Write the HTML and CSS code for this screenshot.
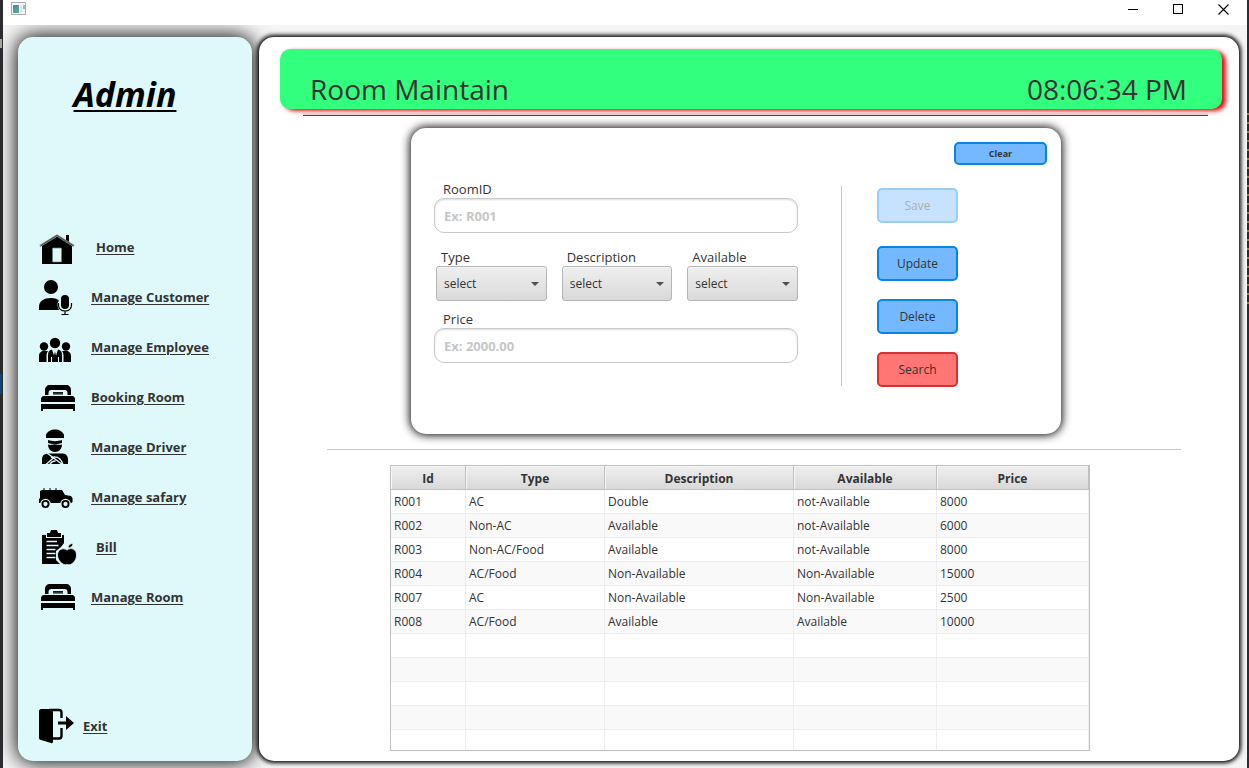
FILE: index.html
```html
<!DOCTYPE html>
<html lang="en">
<head>
<meta charset="utf-8">
<title>Room Maintain</title>
<link rel="stylesheet" href="styles.css">
</head>
<body>
<div class="window">
  <header class="titlebar">
    <svg class="titlebar__icon" width="16" height="14" viewBox="0 0 16 14" aria-hidden="true">
      <defs><linearGradient id="pane" x1="0" y1="0" x2="1" y2="1"><stop offset="0" stop-color="#4a83b5"/><stop offset="1" stop-color="#5fb287"/></linearGradient></defs>
      <rect x="0.5" y="0.5" width="14" height="12" fill="#fafafa" stroke="#a9adb3"/>
      <rect x="2" y="3" width="6" height="8" fill="url(#pane)"/>
      <rect x="9" y="3" width="2" height="8" fill="#dfe2e4"/>
      <rect x="12" y="3" width="2" height="4" fill="#8fbcc0"/>
    </svg>
    <div class="titlebar__controls">
      <button class="winbtn" aria-label="Minimize"><svg width="11" height="11" viewBox="0 0 11 11"><path d="M0 5.500h10" stroke="#000"/></svg></button>
      <button class="winbtn" aria-label="Maximize"><svg width="11" height="11" viewBox="0 0 11 11"><rect x="0.500" y="0.500" width="9" height="9" fill="none" stroke="#000"/></svg></button>
      <button class="winbtn" aria-label="Close"><svg width="11" height="11" viewBox="0 0 11 11"><path d="M0.500 0.500l10 10M10.500 0.500l-10 10" stroke="#000" stroke-width="1.100"/></svg></button>
    </div>
  </header>

  <div class="workspace">
    <aside class="sidebar">
      <h1 class="sidebar__title">Admin</h1>
      <nav class="nav">
        <a class="nav__link nav__link--inset" href="#home">
          <svg class="icon" viewBox="0 0 36 36"><path d="M3 16L18 7l15 9v19H3z"/><path d="M27 6h3v9l-3-2z"/><path d="M1 17L18 6.500 35 17" fill="none" stroke="#77898b" stroke-width="2.200"/><path d="M2 16.500L18 6.500 34 16.500" fill="none" stroke="#222" stroke-width=".6"/><path d="M13.500 19h9v14h-9z" fill="#dff8fa" stroke="#6f8082" stroke-width=".7"/></svg>
          <span>Home</span></a>
        <a class="nav__link" href="#customer">
          <svg class="icon" viewBox="0 0 36 36"><circle cx="12" cy="8" r="7"/><path d="M0 31v-3c0-6 5-9 12-9 4 0 7 1 8 3-2 1-2 5 0 9z"/><rect x="22" y="16" width="8" height="14" rx="4"/><path d="M19.500 24v2c0 4 3 6 6.500 6s6.500-2 6.500-6v-2M26 32v4M22.500 35.500h7" fill="none" stroke="#000" stroke-width="1.200"/></svg>
          <span>Manage Customer</span></a>
        <a class="nav__link" href="#employee">
          <svg class="icon" viewBox="0 0 36 36"><circle cx="16" cy="14" r="5.200"/><circle cx="5" cy="17.500" r="4.200"/><circle cx="27" cy="17.500" r="4.200"/><path d="M0 33v-6c0-3 2-5 5-5h4c-1 1-1.500 3-1.500 5v6zM32 33v-6c0-3-2-5-5-5h-4c1 1 1.500 3 1.500 5v6zM9 33v-7c0-3 1-4.500 4-5.500l2 6 1-4 1 4 2-6c3 1 4 2.500 4 5.500v7z"/><path d="M12.500 33v-5M19.500 33v-5" stroke="#dff8fa"/></svg>
          <span>Manage Employee</span></a>
        <a class="nav__link" href="#booking">
          <svg class="icon" viewBox="0 0 36 36"><path d="M6 16v-5c0-3 2-5 5-5h16c3 0 5 2 5 5v5h-3.500v-2c0-2-1-3-3-3H12.500c-2 0-3 1-3 3v2zM14 13h10v2.500H14zM5 17h28c2 0 3 1.500 3 3v3H2v-3c0-1.500 1-3 3-3zM2 25h34v7h-2v-2H4v2H2z"/><path d="M14 14.200h10" stroke="#67797b" stroke-width=".7"/></svg>
          <span>Booking Room</span></a>
        <a class="nav__link" href="#driver">
          <svg class="icon" viewBox="0 0 36 36"><path d="M7 6c1-3.500 5-5.500 9-5.500S24 2.500 25 6v3H7zM9 11c4 1.500 10 1.500 14 0v3c-4 1.500-10 1.500-14 0zM9 15.500c2 1 4 0 7 0s5 1 7 0c0 4.500-3 7.500-7 7.500s-7-3-7-7.500zM3 35v-5c0-3 2-5 5-5.500h16c3 0 5 3 5 5.500v5z"/><path d="M8 24L24 36M7 35.500l9-8M12 28.500c6-2 10 1 12 7M10.500 36c1-2 3-4 6-4" fill="none" stroke="#dff8fa" stroke-width="1.300"/></svg>
          <span>Manage Driver</span></a>
        <a class="nav__link" href="#safary">
          <svg class="icon" viewBox="0 0 36 36"><path d="M1 12l2-1h20l3 5 6 1 1.500 2v4l-1 1H0v-4l1-1z"/><path d="M5 10.500v-1M11 10.500v-1M17 10.500v-1" stroke="#000" stroke-width="2"/><circle cx="6.500" cy="25" r="5.300" fill="#dff8fa"/><circle cx="26.500" cy="25" r="5.300" fill="#dff8fa"/><circle cx="6.500" cy="25" r="3.100" fill="none" stroke="#000" stroke-width="1.900"/><circle cx="26.500" cy="25" r="3.100" fill="none" stroke="#000" stroke-width="1.900"/></svg>
          <span>Manage safary</span></a>
        <a class="nav__link nav__link--inset" href="#bill">
          <svg class="icon" viewBox="0 0 36 36" overflow="visible"><path d="M3 6h4v3h16V6h2v8l-3 4-5 4v9l4 4H3z"/><path d="M8 4h3l1-3h6l1 3h3v4H8z"/><path d="M7.500 12.500H18M7.500 16.500h12M7.500 20.500h9M7.500 24.500h9M7.500 28.500h9" stroke="#dff8fa" stroke-width="1.600"/><path d="M28 21c4-3 9.500-1 9.500 5s-5 11-9.500 9.500C23.500 37 18.500 31 18.500 26s5-8 9.500-5zM29 19c0-3 2-4.500 5-4.500 0 2.500-2 4.500-5 4.500zM25.500 15l2 4" stroke="#dff8fa" stroke-width=".8"/></svg>
          <span>Bill</span></a>
        <a class="nav__link" href="#room">
          <svg class="icon" viewBox="0 0 36 36"><path d="M6 15v-5c0-3 2-5 5-5h16c3 0 5 2 5 5v5h-3.500v-2c0-2-1-3-3-3H12.500c-2 0-3 1-3 3v2zM14 12h10v2.500H14zM5 16h28c2 0 3 1.500 3 3v3H2v-3c0-1.500 1-3 3-3zM2 24h34v7h-2v-2H4v2H2z"/><path d="M14 13.200h10" stroke="#67797b" stroke-width=".7"/></svg>
          <span>Manage Room</span></a>
      </nav>
      <a class="nav__link nav__link--exit" href="#exit">
        <svg class="icon" viewBox="0 0 36 36"><path d="M2 1h9c2 0 3 1 3 3v30c0 1-1 1.500-2 1L2 32c-1 0-2-1-2-2V3c0-1 1-2 2-2z"/><path d="M10 2h10c1.500 0 2.500 1 2.500 2.500V10M22.500 20v8c0 1.500-1 2.500-2.500 2.500h-6" fill="none" stroke="#000" stroke-width="2.400"/><path d="M19 13.500h8V8l8 7-8 7v-5.500h-8z"/></svg>
        <span>Exit</span></a>
    </aside>

    <main class="main">
      <div class="banner">
        <h2 class="banner__title">Room Maintain</h2>
        <time class="banner__clock">08:06:34 PM</time>
      </div>
      <hr class="banner-rule">

      <form class="card" onsubmit="return false">
        <div class="card__top"><button type="button" class="btn btn--clear">Clear</button></div>
        <div class="card__body">
          <div class="fields">
            <label class="label label--input" for="room-id">RoomID</label>
            <input class="input" id="room-id" type="text" placeholder="Ex: R001">
            <div class="choices">
              <div class="choice">
                <label class="label" for="type">Type</label>
                <div class="picker"><select class="select" id="type"><option>select</option><option>AC</option><option>Non-AC</option></select></div>
              </div>
              <div class="choice">
                <label class="label" for="description">Description</label>
                <div class="picker"><select class="select" id="description"><option>select</option><option>Double</option></select></div>
              </div>
              <div class="choice">
                <label class="label" for="available">Available</label>
                <div class="picker"><select class="select" id="available"><option>select</option><option>Available</option><option>not-Available</option></select></div>
              </div>
            </div>
            <label class="label label--input" for="price">Price</label>
            <input class="input" id="price" type="text" placeholder="Ex: 2000.00">
          </div>
          <div class="actions">
            <button type="button" class="btn btn--save" disabled>Save</button>
            <button type="button" class="btn">Update</button>
            <button type="button" class="btn">Delete</button>
            <button type="button" class="btn btn--search">Search</button>
          </div>
        </div>
      </form>

      <hr class="section-rule">

      <table class="rooms">
        <colgroup><col class="c-id"><col class="c-type"><col class="c-desc"><col class="c-avail"><col class="c-price"></colgroup>
        <thead><tr><th>Id</th><th>Type</th><th>Description</th><th>Available</th><th>Price</th></tr></thead>
        <tbody>
          <tr><td>R001</td><td>AC</td><td>Double</td><td>not-Available</td><td>8000</td></tr>
          <tr><td>R002</td><td>Non-AC</td><td>Available</td><td>not-Available</td><td>6000</td></tr>
          <tr><td>R003</td><td>Non-AC/Food</td><td>Available</td><td>not-Available</td><td>8000</td></tr>
          <tr><td>R004</td><td>AC/Food</td><td>Non-Available</td><td>Non-Available</td><td>15000</td></tr>
          <tr><td>R007</td><td>AC</td><td>Non-Available</td><td>Non-Available</td><td>2500</td></tr>
          <tr><td>R008</td><td>AC/Food</td><td>Available</td><td>Available</td><td>10000</td></tr>
          <tr><td></td><td></td><td></td><td></td><td></td></tr>
          <tr><td></td><td></td><td></td><td></td><td></td></tr>
          <tr><td></td><td></td><td></td><td></td><td></td></tr>
          <tr><td></td><td></td><td></td><td></td><td></td></tr>
          <tr class="rooms__last"><td></td><td></td><td></td><td></td><td></td></tr>
        </tbody>
      </table>
    </main>
  </div>
</div>
</body>
</html>
```
FILE: styles.css
```css
* { box-sizing: border-box; }

/* The desktop shows as a thin dark strip on both sides of the window */
body {
  margin: 0;
  padding: 0 2px 0 3px;
  background:
    linear-gradient(#0d4a80, #0d4a80) 0 374px / 2px 20px no-repeat,
    linear-gradient(#b0a8a0, #b0a8a0) 0 39px / 2px 9px no-repeat,
    repeating-linear-gradient(#2b2b2b 0 7px, #a8820f 7px 9px) 100% 106px / 2px 204px no-repeat,
    #2b2d30;
  color: #333;
  font: 12px/16px "Open Sans", "Noto Sans", sans-serif;
}

.window {
  display: flex;
  flex-direction: column;
  min-height: 100vh;
  background: #f4f4f4;
}

/* Title bar */
.titlebar {
  display: flex;
  align-items: flex-start;
  justify-content: space-between;
  height: 25px;
  padding: 2px 1px 0 8px;
  background: #fff;
  position: relative;
  z-index: 1;
}
.titlebar__controls { display: flex; }
.winbtn {
  display: grid;
  place-items: center;
  width: 45px;
  height: 15px;
  padding: 0;
  border: 0;
  background: none;
}

.workspace {
  display: flex;
  flex: 1;
  gap: 7px;
  padding: 12px 8px 7px 15px;
}

/* Sidebar */
.sidebar {
  display: flex;
  flex-direction: column;
  flex: 0 0 234px;
  padding: 32px 21px 17px;
  border-radius: 15px;
  background: #dff8fa;
  box-shadow: 0 0 20px 1px #000;
}
.sidebar__title {
  margin: 0 0 103px;
  padding-right: 20px;
  color: #000;
  font-size: 34px;
  font-style: italic;
  font-weight: 700;
  line-height: 50px;
  text-align: center;
  text-decoration: underline;
  text-decoration-thickness: 2px;
  text-underline-offset: 3px;
}
.nav { display: flex; flex-direction: column; }
.nav__link {
  display: flex;
  align-items: center;
  gap: 16px;
  height: 50px;
  color: #333;
  font-size: 13px;
  font-weight: 700;
  text-underline-offset: 2px;
}
.nav__link--inset { gap: 21px; }
.nav__link--exit { gap: 8px; margin-top: auto; height: 36px; }
.icon { flex: none; width: 36px; height: 36px; }

/* Main panel */
.main {
  flex: 1;
  padding: 12px 17px 10px 21px;
  border-radius: 15px;
  background: #fff;
  box-shadow: 0 0 4px 2px #000;
}
.banner {
  display: flex;
  align-items: flex-end;
  justify-content: space-between;
  height: 60px;
  padding: 0 35px 0 30px;
  border-radius: 10px;
  background: #33ff7e;
  box-shadow: 4px 2px 4px #e01010;
}
.banner__title,
.banner__clock {
  margin: 0;
  font-size: 28px;
  font-weight: 400;
  line-height: 40px;
}
.banner-rule {
  height: 4px;
  margin: 3px 14px 0 23px;
  border: 0;
  border-bottom: 1px solid #f00000;
  background: #f0c8c8;
}

/* Form card */
.card {
  margin: 12px 161px 0 131px;
  padding: 14px 14px 48px 23px;
  border-radius: 15px;
  background: #fff;
  box-shadow: 0 0 10px 1px #000;
}
.card__top { display: flex; justify-content: flex-end; }
.card__body { display: flex; padding-top: 16px; }
.fields { flex: 1; }
.label { display: block; font-size: 13px; line-height: 17px; padding-left: 5px; }
.label--input { padding-left: 9px; }
.input {
  width: 100%;
  height: 35px;
  display: block;
  padding: 0 9px;
  border: 1px solid #c8c8c8;
  border-radius: 10px;
  background: #fff;
  box-shadow: inset 0 1px 2px #ddd;
  font: 700 13px/17px "Open Sans", "Noto Sans", sans-serif;
}
.input::placeholder { color: #c6c6c6; opacity: 1; }
.choices {
  display: flex;
  gap: 15px;
  margin: 16px 0 10px;
  padding-left: 2px;
}
.choice { flex: 1; }
.picker { position: relative; }
.picker::after {
  content: "";
  position: absolute;
  top: 16px;
  right: 8px;
  border: 4px solid transparent;
  border-top-color: #505050;
  border-bottom: 0;
  pointer-events: none;
}
.select {
  appearance: none;
  display: block;
  width: 100%;
  height: 35px;
  padding: 0 7px;
  border: 1px solid #b5b5b5;
  border-radius: 3px;
  background: linear-gradient(#efefef, #d9d9d9);
  box-shadow: inset 0 1px #f8f8f8;
  color: #333;
  font: inherit;
}
.actions {
  display: flex;
  flex-direction: column;
  align-items: flex-start;
  gap: 18px;
  width: 206px;
  margin: 5px 0 0 43px;
  padding: 2px 0 0 35px;
  height: 200px;
  border-left: 1px solid #c8c8c8;
}
.btn {
  width: 81px;
  height: 35px;
  flex: none;
  padding: 0;
  border: 2px solid #0984e3;
  border-radius: 5px;
  background: #74b9ff;
  color: #333;
  font: inherit;
}
.btn--save { margin-bottom: 5px; opacity: .4; }
.btn--search { border-color: #d63031; background: #ff7675; }
.btn--clear { width: 93px; height: 23px; font-size: 9px; font-weight: 700; line-height: 12px; }

.section-rule {
  margin: 15px 41px 15px 47px;
  border: 0;
  border-top: 1px solid #c8c8c8;
}

/* Rooms table */
.rooms {
  width: 700px;
  max-width: 100%;
  margin-left: 110px;
  border: 1px solid #c0c0c0;
  border-spacing: 0;
  table-layout: fixed;
}
.c-id { width: 75px; }
.c-type { width: 139px; }
.c-desc { width: 189px; }
.c-avail { width: 143px; }
.rooms th,
.rooms td {
  height: 24px;
  padding: 0 3px;
  border-right: 1px solid #ededed;
  border-bottom: 1px solid #ededed;
}
.rooms td { text-align: left; }
.rooms th {
  padding-top: 2px;
  border-color: #c0c0c0;
  background: linear-gradient(#efefef, #d9d9d9);
  box-shadow: inset 1px 1px #f6f6f6;
  font-weight: 700;
}
.rooms tbody tr:nth-child(even) { background: #f9f9f9; }
.rooms .rooms__last td { height: 20px; border-bottom: 0; }
```
